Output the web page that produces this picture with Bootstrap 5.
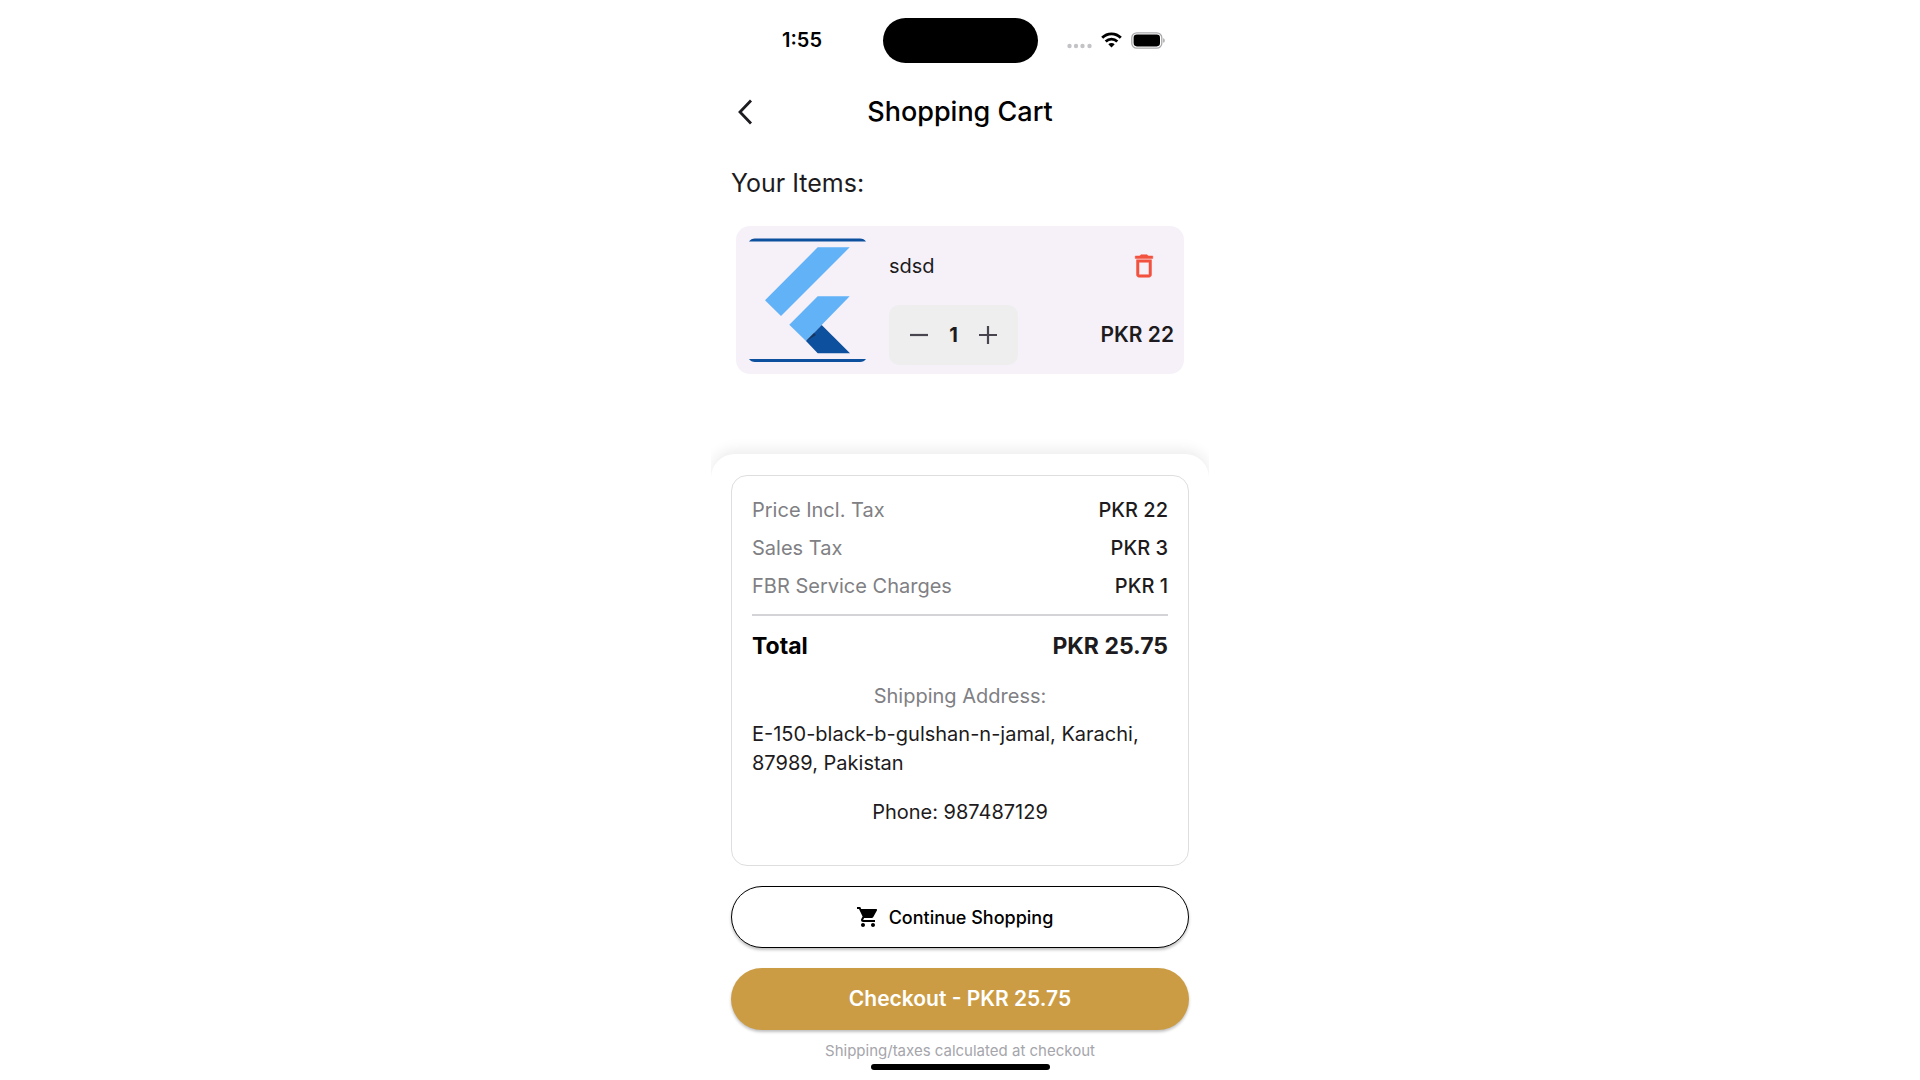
<!DOCTYPE html>
<html lang="en">
<head>
<meta charset="utf-8">
<meta name="viewport" content="width=device-width, initial-scale=1">
<title>Shopping Cart</title>
<link href="https://cdn.jsdelivr.net/npm/bootstrap@5.3.0/dist/css/bootstrap.min.css" rel="stylesheet">
<style>
  body { font-family: Inter, Roboto, sans-serif; font-size: 20px; line-height: 30px; color: #1d1b20; background: #fff; }
  .phone { max-width: 498px; min-height: 100vh; overflow: hidden; }
  .status { height: 80px; color: #000; }
  .clock { padding-left: 71px; font-weight: 600; }
  .island { width: 155px; height: 45px; background: #000; }
  .signals { padding-left: 29px; gap: 9px; }
  .topbar { height: 64px; padding: 0 20px; }
  .topbar .side { width: 32px; height: 32px; }
  .screen-title { font-size: 27px; line-height: 36px; font-weight: 500; color: #000; }
  .section-title { font-size: 25px; line-height: 32px; font-weight: 400; padding: 23px 20px 0; }
  .item { margin: 27px 25px 80px; padding: 12px 12px 9px 13px; border-radius: 14px; background: #f6f1f9; }
  .item-body { padding-left: 23px; }
  .item-top { height: 56px; padding-right: 13px; }
  .item-bottom { margin-top: 11px; }
  .stepper { width: 129px; height: 60px; padding: 0 18px; border-radius: 10px; background: #eee; }
  .bare { padding: 0; border: 0; background: none; line-height: 1; display: flex; align-items: center; justify-content: center; }
  .item-price { margin-right: -2px; font-size: 21px; }
  .sheet { padding: 21px 20px 10px; border-radius: 24px 24px 0 0; background: #fff; box-shadow: 0 -4px 14px rgba(0,0,0,.08); }
  .summary { padding: 19px 20px 38px; border: 1px solid #dedee0; border-radius: 16px; }
  .amounts { gap: 8px; }
  .amounts dt, .muted { font-weight: 400; color: #808084; }
  .amounts dd { font-weight: 500; }
  .total { margin-top: 13px; padding-top: 14px; border-top: 2px solid #d4d4d8; font-size: 23px; line-height: 32px; font-weight: 700; }
  .ship { margin-top: 19px; }
  .address { margin-top: 9px; line-height: 29px; }
  .tall { margin-top: 20px; height: 62px; }
  .pill { border: 0; border-radius: 31px; box-shadow: 0 2px 3px rgba(0,0,0,.25); font-size: 21px; }
  .pill-line { padding-right: 22px; border: 1px solid #000; background: #fff; color: #000; font-size: 18px; font-weight: 500; gap: 12px; }
  .pill-gold { background: #cb9c44; color: #fff; font-weight: 600; }
  .pill-line:hover { background: #f7f7f7; color: #000; }
  .pill-gold:hover { background: #b98c39; color: #fff; }
  .note { margin-top: 11px; font-size: 15px; line-height: 20px; color: #a5a5ab; }
  .home-bar { width: 179px; height: 6px; margin-top: 3px; background: #000; }
</style>
</head>
<body>
<div class="phone mx-auto d-flex flex-column">
  <div class="status d-flex align-items-center">
    <div class="clock flex-fill w-25">1:55</div>
    <div class="island rounded-pill flex-shrink-0"></div>
    <div class="signals flex-fill w-25 d-flex align-items-center">
      <svg width="25" height="17" viewBox="0 0 25 17" fill="#c3c3c7" aria-hidden="true"><circle cx="2.500" cy="14" r="2.200"/><circle cx="9" cy="14" r="2.200"/><circle cx="15.500" cy="14" r="2.200"/><circle cx="22.500" cy="14" r="2.200"/></svg>
      <svg width="21" height="16" viewBox="0 0 21 16" aria-hidden="true"><g fill="none" stroke="#000" stroke-width="2.800"><path d="M1.200 5.800C6.300.500 14.700.500 19.800 5.800"/><path d="M4.700 9.500C8 6.200 13 6.200 16.300 9.500"/></g><path d="M7.300 12.200c1.900-1.700 4.500-1.700 6.400 0L10.500 15.600z"/></svg>
      <svg width="34" height="17" viewBox="0 0 34 17" aria-hidden="true"><rect x=".8" y=".8" width="30" height="15.400" rx="5" fill="none" stroke="#a9a9ad" stroke-width="1.300"/><rect x="2.600" y="2.600" width="26.400" height="11.800" rx="3.300" fill="#000"/><path d="M32.300 6.200c1.800.7 1.800 3.900 0 4.600z" fill="#98989c"/></svg>
    </div>
  </div>

  <header class="topbar d-flex align-items-center justify-content-between">
    <button class="bare side" type="button" aria-label="Back"><svg width="32" height="32" viewBox="0 0 32 32" fill="none" stroke="#1d1b20" stroke-width="2.800" aria-hidden="true"><path d="M20 4.500 9 16l11 11.500"/></svg></button>
    <h1 class="screen-title mb-0">Shopping Cart</h1>
    <span class="side"></span>
  </header>

  <main class="d-flex flex-column flex-grow-1">
    <h2 class="section-title mb-0">Your Items:</h2>

    <article class="item d-flex">
      <svg class="flex-shrink-0" width="117" height="124" viewBox="0 0 117 124" role="img" aria-label="Flutter logo">
        <path d="M0 3.500Q2 .5 6 .5H111Q115 .5 117 3.500zM0 121h117q-2 3-6 3H6q-4 0-6-3z" fill="#0d509e"/>
        <path d="M68.700 9.300h32L32 78 16 62.300zM68.700 58.300h32L57 103 40.300 86.700z" fill="#62b2f8"/>
        <path d="M72.700 87 101 115.300H68.700L57 103z" fill="#0d509e"/>
        <path d="M57 103 65 95l2 2z" fill="#19355d"/>
      </svg>
      <div class="item-body flex-grow-1">
        <div class="item-top d-flex align-items-center justify-content-between">
          <span>sdsd</span>
          <button class="bare" type="button" aria-label="Remove item"><svg width="30" height="30" viewBox="0 0 24 24" fill="#f2523f" stroke="#f2523f" stroke-width=".4" aria-hidden="true"><path d="M6 19c0 1.100.9 2 2 2h8c1.100 0 2-.9 2-2V7H6v12zM8 9h8v10H8V9zm7.500-5-1-1h-5l-1 1H5v2h14V4z"/></svg></button>
        </div>
        <div class="item-bottom d-flex align-items-center justify-content-between">
          <div class="stepper d-flex align-items-center justify-content-between">
            <button class="bare" type="button" aria-label="Decrease quantity"><svg width="24" height="24" viewBox="0 0 24 24" stroke="#49454f" stroke-width="2.200" aria-hidden="true"><path d="M3 12h18"/></svg></button>
            <span class="fw-bold">1</span>
            <button class="bare" type="button" aria-label="Increase quantity"><svg width="24" height="24" viewBox="0 0 24 24" stroke="#49454f" stroke-width="2.200" aria-hidden="true"><path d="M3 12h18M12 3v18"/></svg></button>
          </div>
          <strong class="item-price fw-semibold">PKR 22</strong>
        </div>
      </div>
    </article>

    <section class="sheet flex-grow-1">
      <div class="summary">
        <dl class="amounts d-flex flex-column mb-0">
          <div class="d-flex justify-content-between"><dt>Price Incl. Tax</dt><dd class="mb-0">PKR 22</dd></div>
          <div class="d-flex justify-content-between"><dt>Sales Tax</dt><dd class="mb-0">PKR 3</dd></div>
          <div class="d-flex justify-content-between"><dt>FBR Service Charges</dt><dd class="mb-0">PKR 1</dd></div>
        </dl>
        <div class="total d-flex justify-content-between"><span class="text-black">Total</span><span>PKR 25.75</span></div>
        <p class="ship muted text-center mb-0">Shipping Address:</p>
        <p class="address mb-0">E-150-black-b-gulshan-n-jamal, Karachi, 87989, Pakistan</p>
        <p class="ship text-center mb-0">Phone: 987487129</p>
      </div>
      <button class="btn pill pill-line tall w-100 d-flex align-items-center justify-content-center" type="button">
        <svg width="20" height="20" viewBox="1 2 20 20" aria-hidden="true"><path d="M7 18c-1.100 0-1.990.9-1.990 2S5.900 22 7 22s2-.9 2-2-.9-2-2-2zM1 2v2h2l3.600 7.590-1.350 2.450c-.16.280-.25.610-.25.960 0 1.100.9 2 2 2h12v-2H7.420c-.14 0-.25-.11-.25-.25l.03-.12.9-1.630h7.450c.75 0 1.410-.41 1.750-1.030l3.580-6.490A1 1 0 0 0 20 4H5.210l-.94-2H1zm16 16c-1.100 0-1.990.9-1.990 2s.89 2 1.990 2 2-.9 2-2-.9-2-2-2z"/></svg>
        Continue Shopping
      </button>
      <button class="btn pill pill-gold tall w-100" type="button">Checkout - PKR 25.75</button>
      <p class="note text-center mb-0">Shipping/taxes calculated at checkout</p>
      <div class="home-bar rounded-pill mx-auto"></div>
    </section>
  </main>
</div>
<script src="https://cdn.jsdelivr.net/npm/bootstrap@5.3.0/dist/js/bootstrap.bundle.min.js"></script>
</body>
</html>
